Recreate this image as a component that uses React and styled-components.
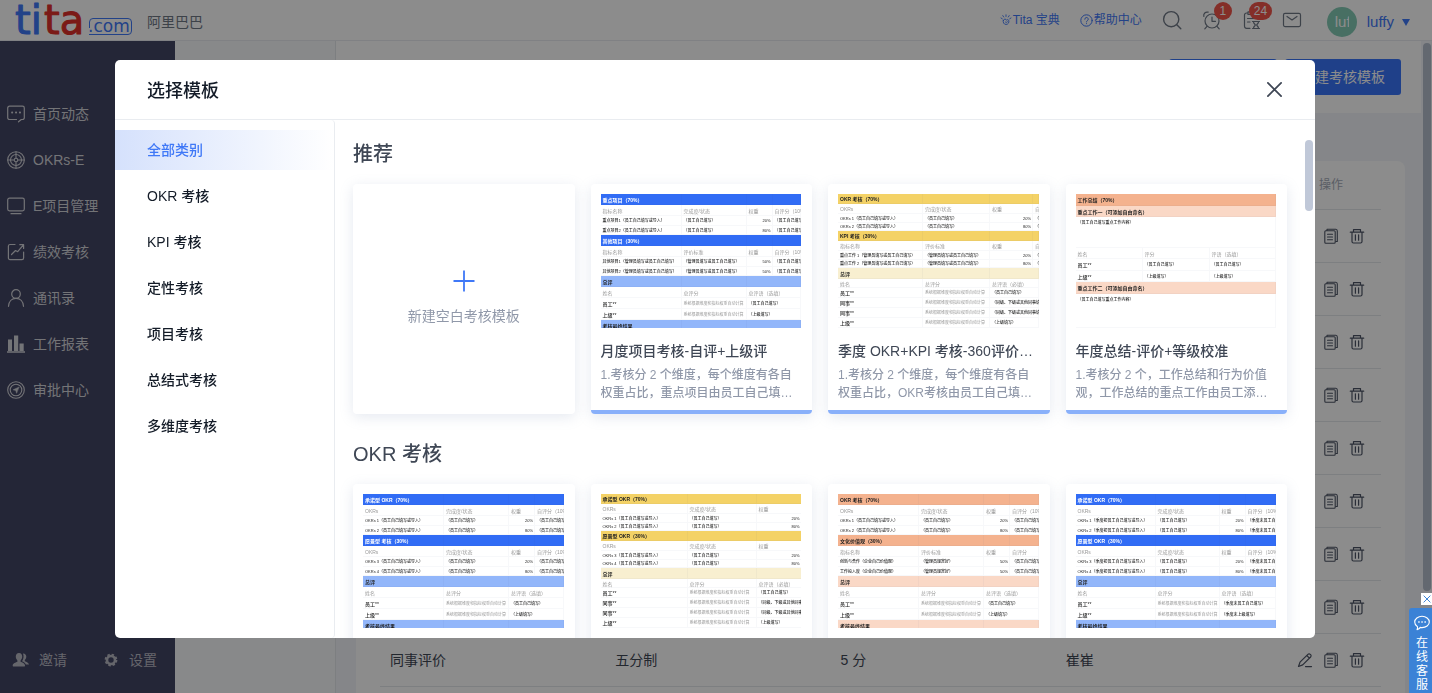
import React from "react";
import styled, { createGlobalStyle, css } from "styled-components";

const GlobalStyle = createGlobalStyle`
  *, *::before, *::after { box-sizing: border-box; }
  html, body, #root { height: 100%; }
  body {
    margin: 0;
    overflow: hidden;
    background: #f3f5f9;
    color: #3f4755;
    font-family: "Liberation Sans", "Noto Sans CJK SC", sans-serif;
    font-size: 14px;
    line-height: 20px;
  }
  button { font: inherit; color: inherit; background: none; border: 0; padding: 0; cursor: pointer; }
  a { color: inherit; text-decoration: none; }
  h1, h2, h3, p, ul { margin: 0; padding: 0; font-weight: 500; }
  ul { list-style: none; }
  svg { display: block; flex: none; overflow: visible; }
`;

const Shell = styled.div`
  display: flex;
  flex-direction: column;
  height: 100vh;
`;

/* ---------- top bar ---------- */

const TopBar = styled.header`
  display: flex;
  align-items: center;
  flex: none;
  height: 41px;
  padding: 0 22px 0 15px;
  background: #fff;
  border-bottom: 1px solid #e9ecf0;
`;

const Company = styled.span`
  margin: 4px auto 0 15px;
  color: #6f7886;
`;

const TopLink = styled.a`
  display: flex;
  align-items: center;
  gap: 1px;
  margin-right: ${(p) => p.$space}px;
  color: #3f78f7;
  font-size: 12px;
`;

const TopIcons = styled.div`
  display: flex;
  gap: 20px;
  margin-right: 25px;
`;

const IconButton = styled.button`
  position: relative;
  width: 20px;
  height: 20px;
  color: #6f7886;
`;

const Badge = styled.span`
  position: absolute;
  left: 12px;
  bottom: 10px;
  min-width: 18px;
  height: 18px;
  padding: 0 5px;
  border-radius: 9px;
  background: #f0544a;
  color: #fff;
  font-size: 12px;
  line-height: 18px;
  text-align: center;
`;

const WideBadge = styled(Badge)`
  left: 7px;
`;

const Avatar = styled.span`
  display: flex;
  align-items: center;
  justify-content: center;
  width: 30px;
  height: 30px;
  margin-top: 4px;
  border-radius: 50%;
  overflow: hidden;
  background: #84cab5;
  color: #fff;
`;

const AvatarText = styled.span`
  width: 14px;
  overflow: hidden;
  white-space: nowrap;
  font-size: 15px;
`;

const UserMenu = styled.button`
  display: flex;
  align-items: center;
  gap: 8px;
  margin: 4px 0 0 10px;
  color: #3f78f7;
  font-size: 15px;
`;

/* ---------- page frame ---------- */

const Frame = styled.div`
  display: flex;
  flex: 1;
  min-height: 0;
`;

const Sidebar = styled.nav`
  display: flex;
  flex-direction: column;
  justify-content: space-between;
  width: 175px;
  flex: none;
  padding: 50px 0 10px;
  background: #434564;
  color: #d2d3d9;
`;

const SideLink = styled.a`
  display: flex;
  align-items: center;
  gap: 8px;
  height: 46px;
  padding-left: 7px;
`;

const SideFooter = styled.div`
  display: flex;
  align-items: center;
  gap: 35px;
  height: 46px;
  padding-left: 12px;
  color: #b9bac4;
`;

const FooterLink = styled.a`
  display: flex;
  align-items: center;
  gap: 9px;
`;

const SubPanel = styled.div`
  width: 161px;
  flex: none;
  border-right: 1px solid #e4e7ec;
  background: #f7f9fb;
`;

const Main = styled.main`
  flex: 1;
  min-width: 0;
  overflow: hidden;
`;

const Toolbar = styled.div`
  display: flex;
  align-items: center;
  justify-content: flex-end;
  gap: 8px;
  height: 72px;
  padding: 0 20px;
  background: #fff;
`;

const PrimaryButton = styled.button`
  min-width: 108px;
  height: 36px;
  padding: 0 16px;
  border-radius: 3px;
  background: #3a76fa;
  color: #fff;
`;

const ListCard = styled.section`
  margin: 48px 16px 0 20px;
  padding: 0 24px 24px;
  border-radius: 8px;
  background: #fff;
`;

const ListTable = styled.table`
  width: 100%;
  table-layout: fixed;
  border-collapse: collapse;
  th, td {
    padding: 0 10px;
    border-bottom: 1px solid #e4e7ec;
    font-weight: 400;
    text-align: left;
  }
  th { height: 48px; color: #a5acb9; font-size: 12px; }
  th:last-child { text-align: center; }
  td { height: 53px; }
`;

const RowActions = styled.div`
  display: flex;
  justify-content: center;
  gap: 10px;
`;

const RowButton = styled.button`
  width: 16px;
  height: 16px;
  color: #4d5566;
`;

const PageScroll = styled.div`
  width: 11px;
  flex: none;
  padding: 2px 1px 102px 2px;
`;

const Thumb = styled.div`
  width: 8px;
  height: 100%;
  border-radius: 4px;
  background: #b5bdcc;
`;

/* ---------- dialog ---------- */

const Overlay = styled.div`
  position: fixed;
  inset: 0;
  display: flex;
  padding: 60px 117px 55px 115px;
  background: rgba(0, 0, 0, 0.45);
`;

const Dialog = styled.section`
  display: flex;
  flex-direction: column;
  flex: 1;
  min-width: 0;
  border-radius: 5px;
  overflow: hidden;
  background: #fff;
`;

const DialogHead = styled.header`
  display: flex;
  align-items: center;
  justify-content: space-between;
  flex: none;
  height: 60px;
  padding: 0 32px;
  border-bottom: 1px solid #e9ecf0;
`;

const DialogTitle = styled.h1`
  padding-top: 3px;
  color: #141c28;
  font-size: 18px;
  line-height: 28px;
`;

const CloseButton = styled.button`
  width: 17px;
  height: 17px;
  color: #3f4755;
`;

const DialogBody = styled.div`
  display: flex;
  flex: 1;
  min-height: 0;
`;

const Categories = styled.ul`
  display: flex;
  flex-direction: column;
  gap: 6px;
  width: 220px;
  flex: none;
  padding-top: 10px;
  border-right: 1px solid #e9ecf0;
  border-radius: 0 4px 4px 0;
`;

const Category = styled.button`
  width: 100%;
  height: 40px;
  padding-left: 32px;
  text-align: left;
  font-weight: 500;
  color: #141c28;
  ${(p) =>
    p.$active &&
    css`
      color: #3f78f7;
      background: linear-gradient(90deg, #d5e1fc, #fff);
    `}
`;

const Content = styled.div`
  flex: 1;
  min-width: 0;
  padding: 20px 18px 0;
  overflow: hidden;
`;

const Group = styled.section`
  margin-bottom: 26px;
`;

const GroupTitle = styled.h2`
  margin-bottom: 16px;
  font-size: 20px;
  line-height: 28px;
`;

const CardGrid = styled.div`
  display: grid;
  grid-template-columns: repeat(4, minmax(0, 1fr));
  gap: 16px;
`;

const cardBox = css`
  height: 230px;
  border-radius: 4px;
  background: #fff;
  box-shadow: 0 3px 14px rgba(127, 145, 180, 0.2);
`;

const BlankCard = styled.button`
  ${cardBox}
  display: flex;
  flex-direction: column;
  align-items: center;
  justify-content: center;
  gap: 14px;
  padding-bottom: 2px;
  color: #9098a9;
`;

const Card = styled.article`
  ${cardBox}
  padding: 10px 11px 0 10px;
  border-bottom: 4px solid #89b0fa;
`;

const Preview = styled.div`
  height: 134px;
  overflow: hidden;
`;

const CardTitle = styled.h3`
  margin: 13px 0 5px;
  font-size: 14px;
  overflow: hidden;
  white-space: nowrap;
  text-overflow: ellipsis;
`;

const CardText = styled.p`
  display: -webkit-box;
  -webkit-box-orient: vertical;
  -webkit-line-clamp: 2;
  overflow: hidden;
  color: #9098a9;
  font-size: 12px;
  line-height: 18px;
`;

const DialogScroll = styled.div`
  width: 10px;
  flex: none;
  padding-top: 20px;
`;

const DialogThumb = styled(Thumb)`
  height: 71px;
  background: #c0c8d8;
`;

/* ---------- preview sheets ---------- */

const Sheet = styled.table`
  width: 100%;
  table-layout: fixed;
  border-collapse: collapse;
  color: #222;
`;

const cellKinds = {
  band: (t) => css`background: ${t.band}; color: ${t.bandText}; font-weight: 700; font-size: 5px;`,
  soft: (t) => css`background: ${t.soft}; color: #222; font-weight: 700; font-size: 5px;`,
  head: () => css`color: #999; font-size: 5px;`,
  item: () => css`font-size: 4px; font-weight: 500;`,
  plain: () => css`font-size: 4px; font-weight: 500; &:first-child { font-size: 5px; }`,
  people: () => css`
    font-size: 4px;
    font-weight: 500;
    &:first-child { font-size: 5px; }
    &:nth-child(2) { color: #999; font-weight: 400; }
  `,
  note: () => css`vertical-align: top; padding-top: 3px; font-size: 4px; font-weight: 500;`,
};

const Cell = styled.td`
  height: ${(p) => p.$h}px;
  padding: 0 2px;
  overflow: hidden;
  white-space: nowrap;
  line-height: 6px;
  text-align: ${(p) => (p.$right ? "right" : "left")};
  box-shadow: inset -1px -1px 0 rgba(60, 80, 120, 0.04);
  ${(p) => cellKinds[p.$kind](p.$tone)}
`;

const tones = {
  blue: { band: "#316cf5", bandText: "#fff", soft: "#92b6fa" },
  yellow: { band: "#f4d266", bandText: "#222", soft: "#f8efd0" },
  orange: { band: "#f4b28e", bandText: "#222", soft: "#fad8c6" },
};

const AUTO = "系统根据维度和指标权重自动计算";
const SELF = "（员工自己填写）";
const BOSS = "（上级填写）";
const PEER = "（同级、下级或其他同事填写）";

// One scored block: coloured title, column heads and two items.
const block = (title, heads, items, h) => [
  ["band", h[0], [title, "", "", ""]],
  ["head", h[1], heads],
  ["item", h[2], items[0]],
  ["item", h[3], items[1]],
];

const four = [11, 11, 10, 9];
const tight = [10, 10, 9, 8];

const reviewWide = (self, boss) => [
  ["soft", 11, ["总评", "", ""]],
  ["head", 11, ["姓名", "总评分", "总评语（选填）"]],
  ["people", 11, ["员工**", AUTO, self]],
  ["people", 11, ["上级**", AUTO, boss]],
  ["soft", 11, ["考核最终结果", "", ""]],
];

const reviewTight = [
  ["soft", 11, ["总评", "", ""]],
  ["head", 9, ["姓名", "总评分", "总评语（必填）"]],
  ["people", 10, ["员工**", AUTO, SELF]],
  ["people", 10, ["同事**", AUTO, PEER]],
  ["people", 10, ["同事**", AUTO, PEER]],
  ["people", 10, ["上级**", AUTO, BOSS]],
];

const okrHeads = ["OKRs", "完成度/状态", "权重", "自评分（10%）"];
const okrItem = (n, w, who = "员工", self = SELF) => [
  `OKRs ${n}（${who}自己填写或导入）`,
  SELF,
  w,
  self,
];

const sheets = {
  monthly: {
    tone: "blue",
    cols: [81, 65, 26],
    rows: [
      ...block("重点项目（70%）", ["指标名称", "完成度/状态", "权重", "自评分（10%）"], [
        ["重点项目1（员工自己填写或导入）", SELF, "20%", SELF],
        ["重点项目2（员工自己填写或导入）", SELF, "80%", SELF],
      ], four),
      ...block("其他项目（30%）", ["指标名称", "评价标准", "权重", "自评分（10%）"], [
        ["其他项目1（管理员填写或员工自己填写）", "（管理员填写或员工自己填写）", "50%", SELF],
        ["其他项目2（管理员填写或员工自己填写）", "（管理员填写或员工自己填写）", "50%", SELF],
      ], four),
      ...reviewWide(SELF, BOSS),
    ],
  },
  quarterly: {
    tone: "yellow",
    cols: [85, 67, 43],
    rows: [
      ...block("OKR 考核（70%）", ["OKRs", "完成度/状态", "权重", "自评分"], [
        okrItem(1, "20%"),
        okrItem(2, "80%"),
      ], tight),
      ...block("KPI 考核（30%）", ["指标名称", "评价标准", "权重", "自评分"], [
        ["重点工作 1（管理员填写或员工自己填写）", "（管理员填写或员工自己填写）", "20%", SELF],
        ["重点工作 2（管理员填写或员工自己填写）", "（管理员填写或员工自己填写）", "80%", SELF],
      ], tight),
      ...reviewTight,
    ],
  },
  annual: {
    tone: "orange",
    cols: [67, 67, 40],
    rows: [
      ["band", 12, ["工作总结（70%）"]],
      ["soft", 11, ["重点工作一（可添加自由命名）"]],
      ["note", 31, ["（员工自己填写重点工作内容）"]],
      ["head", 11, ["姓名", "评分", "评语（选填）"]],
      ["plain", 12, ["员工**", SELF, SELF]],
      ["plain", 11, ["上级**", BOSS, BOSS]],
      ["soft", 12, ["重点工作二（可添加自由命名）"]],
      ["note", 34, ["（员工自己填写重点工作内容）"]],
    ],
  },
  okrBlue: {
    tone: "blue",
    cols: [81, 65, 26],
    rows: [
      ...block("承诺型 OKR（70%）", okrHeads, [okrItem(1, "20%"), okrItem(2, "80%")], four),
      ...block("愿景型 考核（30%）", okrHeads, [okrItem(3, "20%"), okrItem(4, "80%")], four),
      ...reviewWide(SELF, BOSS),
    ],
  },
  okrYellow: {
    tone: "yellow",
    cols: [87, 69, 45],
    rows: [
      ...block("承诺型 OKR（70%）", okrHeads, [okrItem(1, "20%"), okrItem(2, "80%")], tight),
      ...block("愿景型 OKR（30%）", okrHeads, [okrItem(3, "20%"), okrItem(4, "80%")], tight),
      ...reviewTight,
    ],
  },
  okrOrange: {
    tone: "orange",
    cols: [81, 65, 26],
    rows: [
      ...block("OKR 考核（70%）", okrHeads, [okrItem(1, "20%"), okrItem(2, "80%")], four),
      ...block("文化价值观（30%）", ["指标名称", "评价标准", "权重", "自评分"], [
        ["创新与合作（企业自己价值观）", "（管理员规定好）", "50%", SELF],
        ["工作投入度（企业自己价值观）", "（管理员规定好）", "50%", SELF],
      ], four),
      ...reviewWide(SELF, BOSS),
    ],
  },
  okrQuarter: {
    tone: "blue",
    cols: [80, 64, 26],
    rows: [
      ...block("承诺型 OKR（70%）", okrHeads, [
        okrItem(1, "20%", "季度初员工", "（季度末员工自己填写）"),
        okrItem(2, "80%", "季度初员工", "（季度末员工自己填写）"),
      ], four),
      ...block("愿景型 OKR（30%）", okrHeads, [
        okrItem(3, "20%", "季度初员工", "（季度末员工自己填写）"),
        okrItem(4, "80%", "季度初员工", "（季度末员工自己填写）"),
      ], four),
      ...reviewWide("（季度末员工自己填写）", "（季度末上级填写）"),
    ],
  },
};

function SheetPreview({ name }) {
  const { tone, cols, rows } = sheets[name];
  return (
    <Preview>
      <Sheet>
        <colgroup>
          {cols.map((w, i) => (
            <col key={i} width={w} />
          ))}
          <col />
        </colgroup>
        <tbody>
          {rows.map(([kind, h, cells], r) => (
            <tr key={r}>
              {cells.map((text, i) => (
                <Cell
                  key={i}
                  $kind={kind}
                  $h={h}
                  $tone={tones[tone]}
                  $right={kind === "item" && i === 2 && cells.length === 4}
                  colSpan={i === cells.length - 1 ? 5 - cells.length : 1}
                >
                  {text}
                </Cell>
              ))}
            </tr>
          ))}
        </tbody>
      </Sheet>
    </Preview>
  );
}

/* ---------- online service ---------- */

const Service = styled.aside`
  position: fixed;
  right: 0;
  bottom: 0;
  display: flex;
  flex-direction: column;
  align-items: flex-end;
  gap: 3px;
`;

const ServiceClose = styled.button`
  display: flex;
  align-items: center;
  justify-content: center;
  width: 11px;
  height: 12px;
  background: #fff;
  color: #3b82d6;
`;

const ServiceButton = styled.button`
  display: flex;
  flex-direction: column;
  align-items: center;
  gap: 5px;
  width: 23px;
  height: 85px;
  padding: 7px 0 0 3px;
  border-radius: 3px 0 0 0;
  background: #3b82d6;
  color: #fff;
  font-size: 12px;
  line-height: 14px;
`;

const ServiceText = styled.span`
  width: 12px;
  overflow-wrap: anywhere;
`;

/* ---------- drawings ---------- */

const Line = ({ size = 18, width = 1.2, box = 18, children }) => (
  <svg
    width={size}
    height={size}
    viewBox={`0 0 ${box} ${box}`}
    fill="none"
    stroke="currentColor"
    strokeWidth={width}
    strokeLinecap="round"
    strokeLinejoin="round"
    aria-hidden="true"
  >
    {children}
  </svg>
);

const Logo = () => (
  <svg width="117" height="36" viewBox="0 0 117 36" role="img" aria-label="tita.com">
    <g fontFamily="DejaVu Sans" fontSize="40" strokeWidth="1" strokeLinejoin="round">
      <text x="0" y="32" fill="#3f78f7" stroke="#3f78f7">ti</text>
      <text x="29" y="32" fill="#e0302a" stroke="#e0302a">ta</text>
    </g>
    <path
      d="M78 16.500h35q3.500 0 3.500 3.500v9q0 3.500-3.500 3.500h-39M74.500 26v-6q0-3.500 3.500-3.500"
      fill="none"
      stroke="#3f78f7"
    />
    <text x="73" y="30" fontFamily="DejaVu Sans" fontSize="17" fill="#3f78f7">.com</text>
  </svg>
);

const ChatIcon = () => (
  <Line>
    <path d="M9.500 14.500H2.500a1.800 1.800 0 0 1-1.800-1.800V3a1.800 1.800 0 0 1 1.800-1.800h13A1.800 1.800 0 0 1 17.300 3v9.700a1.800 1.800 0 0 1-1.800 1.800h-1.200l-2.800 2.300" />
    <path d="M5 7.500h.3M8.900 7.500h.3M12.800 7.500h.3" strokeWidth="1.800" />
  </Line>
);
const TargetIcon = () => (
  <Line width={1.1}>
    <circle cx="9" cy="9" r="8.300" />
    <circle cx="9" cy="9" r="5.500" />
    <circle cx="9" cy="9" r="1.800" />
    <path d="M9 .7v6M9 11.300v6M.7 9h6M11.300 9h6" />
  </Line>
);
const ScreenIcon = () => (
  <Line>
    <rect x=".7" y="1.200" width="16.600" height="12.600" rx="1.800" />
    <path d="M4 16.700h10" />
  </Line>
);
const TrendIcon = () => (
  <Line>
    <path d="M8 1.500H3A1.600 1.600 0 0 0 1.400 3v12A1.600 1.600 0 0 0 3 16.700h12a1.600 1.600 0 0 0 1.600-1.600V9" />
    <path d="M4.500 11.500 8.500 7.500l2.200 1.200 5.500-6.500M12.800 1.700h3.800v3.800" />
  </Line>
);
const PersonIcon = () => (
  <Line>
    <circle cx="9" cy="5" r="4.300" />
    <path d="M1.500 17.300c.3-5 3.500-8 7.500-8s7.200 3 7.500 8" />
  </Line>
);
const BarsIcon = () => (
  <svg width="18" height="18" viewBox="0 0 18 18" fill="currentColor" aria-hidden="true">
    <path d="M1 4.500h4v11.500H1zM7 .5h4.200v15.500H7zM12.500 8.500h4.200v7.500h-4.200zM0 16.300h18v1.400H0z" />
  </svg>
);
const ApproveIcon = () => (
  <Line width={1.1}>
    <circle cx="9" cy="9" r="8.300" />
    <circle cx="9" cy="9" r="5.800" />
    <path d="m11.800 6.200-5.600 2.600 2.600.6.700 2.500z" fill="currentColor" strokeWidth=".6" />
  </Line>
);
const InviteIcon = () => (
  <svg width="18" height="16" viewBox="0 0 18 16" fill="currentColor" aria-hidden="true">
    <path d="M7 1c2.100 0 3.200 1.500 3.200 3.600 0 1.600-.7 3-1.600 3.800v1.300c1.600.8 4.200 1.500 4.400 3.500 0 1.100-.2 1.300-.8 1.300H1.600c-.6 0-1-.4-.9-1.300.2-2 3.100-2.700 4.700-3.500V8.400C4.500 7.600 3.800 6.200 3.800 4.600 3.800 2.500 4.900 1 7 1z" />
    <path d="M11 1.400c2-.1 3.300 1.200 3.300 3.200 0 1.600-.6 2.700-1.500 3.500v1.200c1.700.8 4 1.500 4.200 3.300h-3.100c-.5-1.700-2.300-2.700-3.900-3.400 1.700-2 2-5.500 1-7.800z" />
  </svg>
);
const GearIcon = () => (
  <svg width="18" height="14" viewBox="-2 0 18 14" aria-hidden="true">
    <circle cx="7" cy="7" r="4" fill="none" stroke="currentColor" strokeWidth="2.600" />
    <circle cx="7" cy="7" r="5.500" fill="none" stroke="currentColor" strokeWidth="1.800" strokeDasharray="2.400 1.920" />
  </svg>
);
const BookIcon = () => (
  <Line size={12} box={12} width={0.9}>
    <path d="M3.300 6.500a2.900 2.900 0 1 0 5.400 0C8.400 5.600 7.600 5 6.600 6.300 6.200 4.500 3.500 4.800 3.300 6.500z" />
    <path d="M5.500 8.200q1.200.8 2-.4M1 4l1.300.8M2.800 1.600l.9 1.400M6 .8v1.700M9.200 1.600l-.9 1.400M11 4l-1.300.8" />
  </Line>
);
const HelpIcon = () => (
  <Line size={13} box={13} width={1}>
    <circle cx="6.500" cy="6.500" r="5.700" />
    <path d="M4.800 5.200a1.700 1.700 0 1 1 2.500 1.500q-.8.400-.8 1.200M6.500 9.600v.1" />
  </Line>
);
const SearchIcon = () => (
  <Line size={20} box={20} width={1.4}>
    <circle cx="9.200" cy="9.200" r="7.600" />
    <path d="m14.800 14.800 4 4" />
  </Line>
);
const AlarmIcon = () => (
  <Line size={20} box={20}>
    <circle cx="10" cy="11" r="7" />
    <path d="M10 7v4.300h3.500M5 16.300l-2.200 2.500M15 16.300l2.200 2.500M1.800 6.500C1.200 3.500 3.500 1.500 6.200 2.200M18.200 6.500c.6-3-1.700-5-4.400-4.300" />
  </Line>
);
const TaskIcon = () => (
  <Line size={20} box={20}>
    <path d="M8 18.300H4.500a2 2 0 0 1-2-2V5a2 2 0 0 1 2-2h1M13 3h1a2 2 0 0 1 2 2v4M6 1.800h6.500v2.700H6zM5.500 8.500h6M5.500 12H8" />
    <path d="M10.500 11.500h7M10.500 18.500h7M11.500 11.700c0 2 1.800 2.300 1.800 3.300s-1.800 1.300-1.800 3.300M16.500 11.700c0 2-1.800 2.300-1.800 3.300s1.800 1.300 1.800 3.300" />
  </Line>
);
const MailIcon = () => (
  <Line size={20} box={20}>
    <rect x="1.500" y="3.400" width="17" height="13.200" rx="1.500" />
    <path d="m5 6.500 5 3.500 5-3.500" />
  </Line>
);
const EditIcon = () => (
  <Line size={16} box={16}>
    <path d="M1.500 14.500 3 10.200 10.900 2.300a1.600 1.600 0 0 1 2.300 0l.4.400a1.600 1.600 0 0 1 0 2.300L5.700 12.900zM9.800 3.500l2.600 2.600M8.500 14.600h6" />
  </Line>
);
const CopyIcon = () => (
  <Line size={16} box={16} width={1.1}>
    <path d="M4 2.500V1.300h8.800q1.500.2 1.500 1.700v10.500h-1.500" />
    <rect x="1.800" y="2.800" width="10.400" height="12.400" rx="1" />
    <path d="M4.500 6.300h5M4.500 9h5M4.500 11.700h5" />
  </Line>
);
const TrashIcon = () => (
  <Line size={16} box={16}>
    <path d="M1.300 4.200h13.400M4.500 4V1.600h7V4M3 4.500v9q0 1.500 1.500 1.500h7q1.500 0 1.500-1.500v-9M6.400 6.800v5.400M9.600 6.800v5.400" />
  </Line>
);
const CrossIcon = ({ size, width }) => (
  <Line size={size} box={18} width={width}>
    <path d="M2 2l14 14M16 2 2 16" />
  </Line>
);
const PlusIcon = () => (
  <svg width="22" height="22" viewBox="0 0 22 22" stroke="#3f78f7" strokeWidth="1.800" aria-hidden="true">
    <path d="M11 .5v21M.5 11h21" />
  </svg>
);
const BubbleIcon = () => (
  <Line size={16} box={16} width={1.1}>
    <path d="M8 1.300c4 0 7.300 2.500 7.300 5.700S12 12.600 8 12.600q-.9 0-1.700-.2-1 1.600-3.300 2.300.8-1.400.5-3C1.800 10.600.7 9 .7 7 .7 3.800 4 1.300 8 1.300z" />
    <path d="M4.800 7h.3M7.900 7h.3M11 7h.3" strokeWidth="1.500" />
  </Line>
);

/* ---------- data ---------- */

const sideItems = [
  ["首页动态", ChatIcon],
  ["OKRs-E", TargetIcon],
  ["E项目管理", ScreenIcon],
  ["绩效考核", TrendIcon],
  ["通讯录", PersonIcon],
  ["工作报表", BarsIcon],
  ["审批中心", ApproveIcon],
];

const categories = ["全部类别", "OKR 考核", "KPI 考核", "定性考核", "项目考核", "总结式考核", "多维度考核"];

const recommended = [
  {
    sheet: "monthly",
    title: "月度项目考核-自评+上级评",
    text: "1.考核分 2 个维度，每个维度有各自权重占比，重点项目由员工自己填写或导入",
  },
  {
    sheet: "quarterly",
    title: "季度 OKR+KPI 考核-360评价+等级校准",
    text: "1.考核分 2 个维度，每个维度有各自权重占比，OKR考核由员工自己填写或导入",
  },
  {
    sheet: "annual",
    title: "年度总结-评价+等级校准",
    text: "1.考核分 2 个，工作总结和行为价值观，工作总结的重点工作由员工添加并填写",
  },
];

const okrSheets = ["okrBlue", "okrYellow", "okrOrange", "okrQuarter"];

const listRows = [
  ...Array.from({ length: 8 }, () => ["", "", "", ""]),
  ["同事评价", "五分制", "5 分", "崔崔"],
];

export default function App() {
  return (
    <>
      <GlobalStyle />
      <Shell>
        <TopBar>
          <Logo />
          <Company>阿里巴巴</Company>
          <TopLink href="#guide" $space={20}>
            <BookIcon />
            Tita 宝典
          </TopLink>
          <TopLink href="#help" $space={20}>
            <HelpIcon />
            帮助中心
          </TopLink>
          <TopIcons>
            <IconButton aria-label="搜索"><SearchIcon /></IconButton>
            <IconButton aria-label="提醒"><AlarmIcon /><Badge>1</Badge></IconButton>
            <IconButton aria-label="待办"><TaskIcon /><WideBadge>24</WideBadge></IconButton>
            <IconButton aria-label="消息"><MailIcon /></IconButton>
          </TopIcons>
          <Avatar><AvatarText>luffy</AvatarText></Avatar>
          <UserMenu>
            luffy
            <svg width="8" height="7" viewBox="0 0 8 7" fill="currentColor" aria-hidden="true">
              <path d="M0 0h8L4 7z" />
            </svg>
          </UserMenu>
        </TopBar>

        <Frame>
          <Sidebar>
            <div>
              {sideItems.map(([label, Icon]) => (
                <SideLink key={label} href="#nav">
                  <Icon />
                  {label}
                </SideLink>
              ))}
            </div>
            <SideFooter>
              <FooterLink href="#invite"><InviteIcon />邀请</FooterLink>
              <FooterLink href="#settings"><GearIcon />设置</FooterLink>
            </SideFooter>
          </Sidebar>
          <SubPanel />
          <Main>
            <Toolbar>
              <PrimaryButton aria-label="更多操作" />
              <PrimaryButton>新建考核模板</PrimaryButton>
            </Toolbar>
            <ListCard>
              <ListTable>
                <colgroup>
                  <col /><col /><col /><col /><col width="100" />
                </colgroup>
                <thead>
                  <tr><th /><th /><th /><th /><th>操作</th></tr>
                </thead>
                <tbody>
                  {listRows.map((cells, r) => (
                    <tr key={r}>
                      {cells.map((c, i) => <td key={i}>{c}</td>)}
                      <td>
                        <RowActions>
                          <RowButton aria-label="编辑"><EditIcon /></RowButton>
                          <RowButton aria-label="复制"><CopyIcon /></RowButton>
                          <RowButton aria-label="删除"><TrashIcon /></RowButton>
                        </RowActions>
                      </td>
                    </tr>
                  ))}
                </tbody>
              </ListTable>
            </ListCard>
          </Main>
          <PageScroll><Thumb /></PageScroll>
        </Frame>
      </Shell>

      <Overlay>
        <Dialog role="dialog" aria-labelledby="dialog-title">
          <DialogHead>
            <DialogTitle id="dialog-title">选择模板</DialogTitle>
            <CloseButton aria-label="关闭"><CrossIcon size={17} width={1.9} /></CloseButton>
          </DialogHead>
          <DialogBody>
            <Categories>
              {categories.map((c, i) => (
                <li key={c}><Category $active={i === 0}>{c}</Category></li>
              ))}
            </Categories>
            <Content>
              <Group>
                <GroupTitle>推荐</GroupTitle>
                <CardGrid>
                  <BlankCard>
                    <PlusIcon />
                    新建空白考核模板
                  </BlankCard>
                  {recommended.map((t) => (
                    <Card key={t.sheet}>
                      <SheetPreview name={t.sheet} />
                      <CardTitle>{t.title}</CardTitle>
                      <CardText>{t.text}</CardText>
                    </Card>
                  ))}
                </CardGrid>
              </Group>
              <Group>
                <GroupTitle>OKR 考核</GroupTitle>
                <CardGrid>
                  {okrSheets.map((s) => (
                    <Card key={s}><SheetPreview name={s} /></Card>
                  ))}
                </CardGrid>
              </Group>
            </Content>
            <DialogScroll><DialogThumb /></DialogScroll>
          </DialogBody>
        </Dialog>
      </Overlay>

      <Service>
        <ServiceClose aria-label="关闭客服"><CrossIcon size={8} width={2.2} /></ServiceClose>
        <ServiceButton>
          <BubbleIcon />
          <ServiceText>在线客服</ServiceText>
        </ServiceButton>
      </Service>
    </>
  );
}
